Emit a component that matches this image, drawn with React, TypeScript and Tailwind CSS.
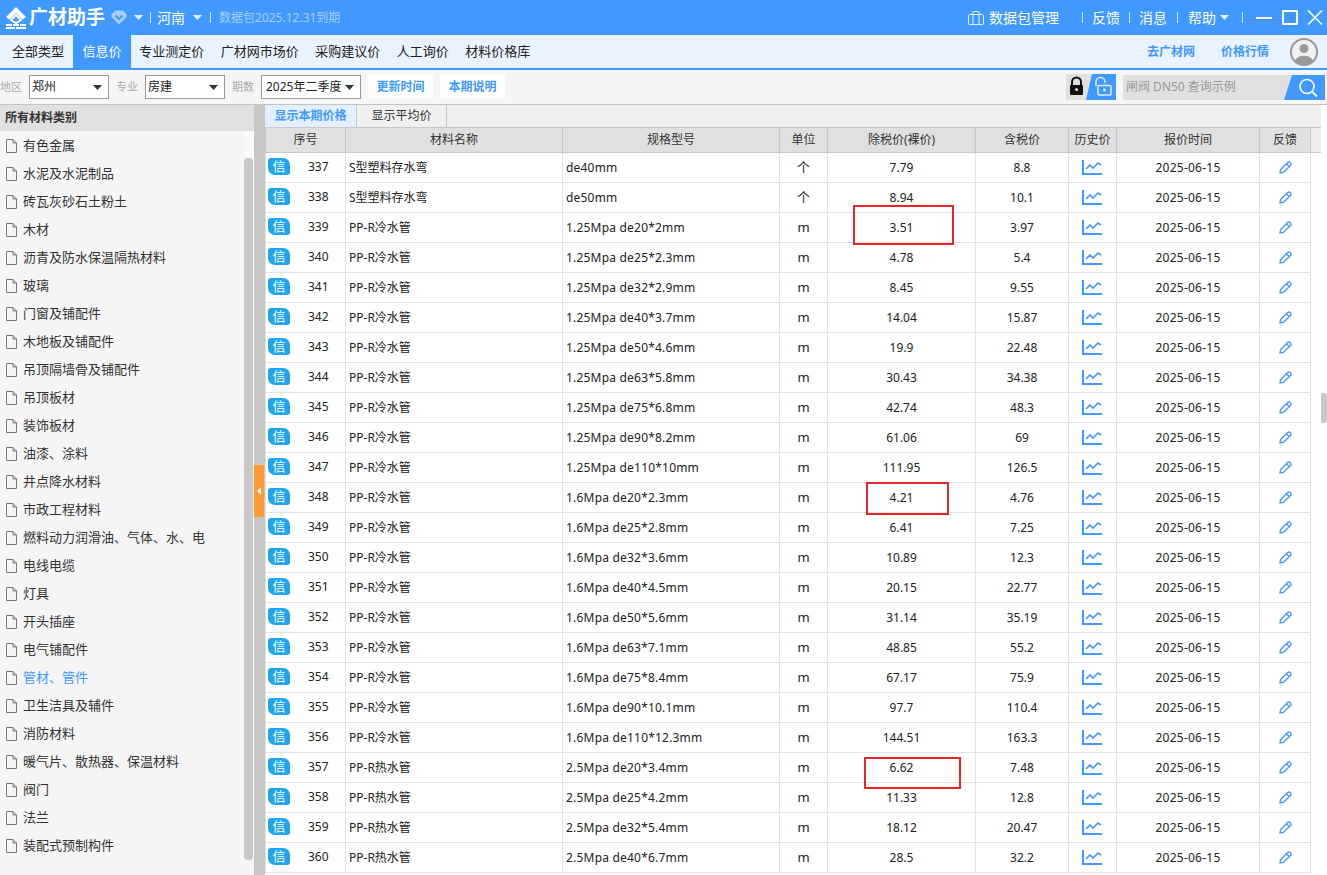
const font = "font-['Noto_Sans','Noto_Sans_CJK_SC',sans-serif]"

const categories = [
  '有色金属', '水泥及水泥制品', '砖瓦灰砂石土粉土', '木材', '沥青及防水保温隔热材料', '玻璃', '门窗及铺配件',
  '木地板及铺配件', '吊顶隔墙骨及铺配件', '吊顶板材', '装饰板材', '油漆、涂料', '井点降水材料', '市政工程材料',
  '燃料动力润滑油、气体、水、电', '电线电缆', '灯具', '开头插座', '电气铺配件', '管材、管件', '卫生洁具及辅件',
  '消防材料', '暖气片、散热器、保温材料', '阀门', '法兰', '装配式预制构件',
]

const rows = [
  [337, 'S型塑料存水弯', 'de40mm', '个', '7.79', '8.8'],
  [338, 'S型塑料存水弯', 'de50mm', '个', '8.94', '10.1'],
  [339, 'PP-R冷水管', '1.25Mpa de20*2mm', 'm', '3.51', '3.97'],
  [340, 'PP-R冷水管', '1.25Mpa de25*2.3mm', 'm', '4.78', '5.4'],
  [341, 'PP-R冷水管', '1.25Mpa de32*2.9mm', 'm', '8.45', '9.55'],
  [342, 'PP-R冷水管', '1.25Mpa de40*3.7mm', 'm', '14.04', '15.87'],
  [343, 'PP-R冷水管', '1.25Mpa de50*4.6mm', 'm', '19.9', '22.48'],
  [344, 'PP-R冷水管', '1.25Mpa de63*5.8mm', 'm', '30.43', '34.38'],
  [345, 'PP-R冷水管', '1.25Mpa de75*6.8mm', 'm', '42.74', '48.3'],
  [346, 'PP-R冷水管', '1.25Mpa de90*8.2mm', 'm', '61.06', '69'],
  [347, 'PP-R冷水管', '1.25Mpa de110*10mm', 'm', '111.95', '126.5'],
  [348, 'PP-R冷水管', '1.6Mpa de20*2.3mm', 'm', '4.21', '4.76'],
  [349, 'PP-R冷水管', '1.6Mpa de25*2.8mm', 'm', '6.41', '7.25'],
  [350, 'PP-R冷水管', '1.6Mpa de32*3.6mm', 'm', '10.89', '12.3'],
  [351, 'PP-R冷水管', '1.6Mpa de40*4.5mm', 'm', '20.15', '22.77'],
  [352, 'PP-R冷水管', '1.6Mpa de50*5.6mm', 'm', '31.14', '35.19'],
  [353, 'PP-R冷水管', '1.6Mpa de63*7.1mm', 'm', '48.85', '55.2'],
  [354, 'PP-R冷水管', '1.6Mpa de75*8.4mm', 'm', '67.17', '75.9'],
  [355, 'PP-R冷水管', '1.6Mpa de90*10.1mm', 'm', '97.7', '110.4'],
  [356, 'PP-R冷水管', '1.6Mpa de110*12.3mm', 'm', '144.51', '163.3'],
  [357, 'PP-R热水管', '2.5Mpa de20*3.4mm', 'm', '6.62', '7.48'],
  [358, 'PP-R热水管', '2.5Mpa de25*4.2mm', 'm', '11.33', '12.8'],
  [359, 'PP-R热水管', '2.5Mpa de32*5.4mm', 'm', '18.12', '20.47'],
  [360, 'PP-R热水管', '2.5Mpa de40*6.7mm', 'm', '28.5', '32.2'],
]

const gridCols = 'grid grid-cols-[81px_217px_217px_48px_148px_93px_48px_143px_51px]'

function Caret({ className = '' }: { className?: string }) {
  return (
    <svg width="9" height="5" viewBox="0 0 9 5" className={`shrink-0 ${className}`}>
      <polygon points="0,0 9,0 4.5,5" fill="currentColor" />
    </svg>
  )
}

function Divider({ className = '' }: { className?: string }) {
  return <div className={`w-px h-[11px] bg-[#d8e9ff] shrink-0 ${className}`} />
}

function Logo() {
  return (
    <svg width="22" height="23" viewBox="0 0 22 23" className="ml-[5px] shrink-0">
      <path d="M11 1 L21 11 L17.5 13.5 L11 7 L4.5 13.5 L1 11 Z" fill="#fff" />
      <path d="M11 9 L16 14 L11 17 L6 14 Z" fill="none" stroke="#fff" strokeWidth="2" />
      <rect x="1" y="18" width="6" height="2" fill="#fff" />
      <rect x="8" y="18" width="6" height="2" fill="#fff" />
      <rect x="15" y="18" width="6" height="2" fill="#fff" />
      <rect x="1" y="21" width="9" height="2" fill="#fff" />
      <rect x="11" y="21" width="10" height="2" fill="#fff" />
    </svg>
  )
}

function TitleBar() {
  return (
    <div className="h-[35px] bg-[#4099ff] flex items-center text-white shrink-0 whitespace-nowrap">
      <Logo />
      <span className="ml-[2px] text-[19px] font-bold leading-none">广材助手</span>
      <svg width="16" height="15" viewBox="0 0 16 15" className="ml-[6px] shrink-0">
        <path d="M4 0.5 H12 L15.5 4.5 V7 L8 14.5 L0.5 7 V4.5 Z" fill="#a9cefb" />
        <path d="M4.5 5.5 L8 9 L11.5 5.5" fill="none" stroke="#4099ff" strokeWidth="2" />
      </svg>
      <Caret className="ml-[7px] text-[#e6f1ff]" />
      <Divider className="ml-[7px]" />
      <span className="ml-[6px] text-[14px] leading-none">河南</span>
      <Caret className="ml-[8px] text-[#e6f1ff]" />
      <Divider className="ml-[8px]" />
      <span className="ml-[8px] text-[12px] leading-none text-[#a6cdfb]">数据包2025.12.31到期</span>
      <div className="flex-1" />

      <svg width="16" height="14" viewBox="0 0 16 14" className="shrink-0" fill="none" stroke="#e6f1ff" strokeWidth="1">
        <rect x="0.5" y="3.5" width="15" height="10" rx="1" />
        <path d="M5 13.5 V1 a0.5 0.5 0 0 1 0.5 -0.5 H10.5 a0.5 0.5 0 0 1 0.5 0.5 V13.5" />
      </svg>
      <span className="ml-[5px] text-[14px] leading-none">数据包管理</span>
      <Divider className="ml-[23px]" />
      <span className="ml-[9px] text-[14px] leading-none">反馈</span>
      <Divider className="ml-[9px]" />
      <span className="ml-[9px] text-[14px] leading-none">消息</span>
      <Divider className="ml-[10px]" />
      <span className="ml-[10px] text-[14px] leading-none">帮助</span>
      <Caret className="ml-[4px] text-[#e6f1ff]" />
      <Divider className="ml-[13px]" />
      <div className="ml-[13px] w-[16px] h-[2px] bg-white" />
      <div className="ml-[10px] w-[16px] h-[15px] border-2 border-white rounded-[1px]" />
      <svg width="16" height="15" viewBox="0 0 16 15" className="ml-[9px] mr-[4px] shrink-0" stroke="#fff" strokeWidth="1.6">
        <path d="M1 0.5 L15 14.5 M15 0.5 L1 14.5" />
      </svg>
    </div>
  )
}

const navTabs = ['专业测定价', '广材网市场价', '采购建议价', '人工询价', '材料价格库']

function NavBar() {
  return (
    <div className="h-[35px] bg-[#e9f2ff] border-b-2 border-[#4099ff] flex items-stretch text-[13px] text-[#222] shrink-0">
      <div className="w-[73px] pl-[3px] flex items-center justify-center">全部类型</div>
      <div className="w-[58px] bg-[#4099ff] text-white flex items-center justify-center">信息价</div>
      {navTabs.map((t) => (
        <div key={t} className="px-[8.25px] flex items-center">
          {t}
        </div>
      ))}
      <div className="flex-1" />
      <div className="flex items-center gap-[26px] font-bold text-[12px] text-[#4099ff]">
        <span>去广材网</span>
        <span>价格行情</span>
      </div>
      <svg width="28" height="28" viewBox="0 0 28 28" className="ml-[21px] mr-[9px] self-center">
        <circle cx="14" cy="14" r="13" fill="#f1f1f1" stroke="#9a9a9a" strokeWidth="2" />
        <circle cx="14" cy="10.5" r="4.5" fill="#9a9a9a" />
        <path d="M5 23 C7 16 21 16 23 23 A13 13 0 0 1 5 23 Z" fill="#9a9a9a" />
      </svg>
    </div>
  )
}

function FakeSelect({ label, value, width, pad, gap }: { label: string; value: string; width: string; pad: string; gap?: string }) {
  return (
    <>
      <span className={`text-[11px] text-[#aaa] ${gap ?? ''}`}>{label}</span>
      <div className={`${width} ${pad} h-[24px] ml-[7px] bg-white border border-[#999] flex items-center justify-between pr-[6px] text-[12px] text-[#222]`}>
        <span>{value}</span>
        <Caret className="text-[#333]" />
      </div>
    </>
  )
}

function Toolbar() {
  return (
    <div className="h-[35px] bg-[#f5f5f5] border-b border-[#c4c4c4] flex items-center shrink-0">
      <FakeSelect label="地区" value="郑州" width="w-[80px]" pad="pl-[2px]" />
      <FakeSelect label="专业" value="房建" width="w-[80px]" pad="pl-[2px]" gap="ml-[7px]" />
      <FakeSelect label="期数" value="2025年二季度" width="w-[100px]" pad="pl-[4px]" gap="ml-[7px]" />
      <div className="ml-[7px] w-[65px] h-[24px] bg-white text-[#4099ff] text-[12px] font-bold flex items-center justify-center">更新时间</div>
      <div className="ml-[7px] w-[65px] h-[24px] bg-white text-[#4099ff] text-[12px] font-bold flex items-center justify-center">本期说明</div>
      <div className="flex-1" />
      <svg width="50" height="26" viewBox="0 0 50 26">
        <rect width="50" height="26" fill="#e0e0e0" />
        <polygon points="26,0 50,0 50,26 20,26" fill="#4099ff" />
        <path d="M6 11.5 V8 a4.5 4.5 0 0 1 9 0 V11.5" fill="none" stroke="#111" strokeWidth="2" />
        <rect x="4" y="11" width="13" height="10" rx="1" fill="#111" />
        <circle cx="10.5" cy="15.5" r="1.6" fill="#e0e0e0" />
        <path d="M30 12 V8 a4.5 4.5 0 0 1 9 0 V9" fill="none" stroke="#e4f0ff" strokeWidth="1.5" />
        <rect x="32" y="11.5" width="13" height="9.5" rx="1" fill="none" stroke="#e4f0ff" strokeWidth="1.5" />
        <circle cx="38.5" cy="16" r="1.4" fill="#e4f0ff" />
      </svg>
      <div className="relative ml-[7px] mr-[2px] w-[202px] h-[25px] bg-[#e0e0e0] overflow-hidden flex items-center pl-[3px] text-[12px] text-[#999]">
        闸阀 DN50 查询示例
        <svg width="41" height="25" viewBox="0 0 41 25" className="absolute right-0 top-0">
          <polygon points="8,0 41,0 41,25 0,25" fill="#4099ff" />
          <circle cx="23" cy="11.5" r="7" fill="none" stroke="#fff" strokeWidth="1.6" />
          <path d="M28.5 17 L33 21.5" stroke="#fff" strokeWidth="1.8" />
        </svg>
      </div>
    </div>
  )
}

function Sidebar() {
  return (
    <div className="relative w-[254px] bg-[#f5f5f5] shrink-0 overflow-hidden">
      <div className="h-[26px] bg-[#e0e0e0] pl-[5px] flex items-center text-[12px] font-bold text-[#333]">所有材料类别</div>
      <div className="flex">
        <div className="w-[244px] pt-px">
          {categories.map((c) => (
            <div key={c} className={`h-[28px] flex items-center pl-[6px] text-[13px] ${c === '管材、管件' ? 'text-[#4099ff]' : 'text-[#333]'}`}>
              <svg width="11" height="14" viewBox="0 0 11 14" fill="none" stroke="#777" strokeWidth="1">
                <path d="M0.5 0.5 H7 L10.5 4 V13.5 H0.5 Z M7 0.5 V4 H10.5" />
              </svg>
              <span className="ml-[6px]">{c}</span>
            </div>
          ))}
        </div>
        <div className="w-[10px] flex flex-col">
          <div className="h-[27px] bg-[#fafafa]" />
          <div className="w-[9px] flex-1 bg-[#c8c8c8] rounded-[4px]" />
        </div>
      </div>
    </div>
  )
}

function Gutter() {
  return (
    <div className="w-[11px] bg-[#c8c7c5] shrink-0 flex flex-col pt-[360px]">
      <div className="w-[10px] h-[52px] bg-[#ff9933] flex items-center justify-center">
        <svg width="4" height="8" viewBox="0 0 4 8">
          <polygon points="4,0 4,8 0,4" fill="#fff" />
        </svg>
      </div>
    </div>
  )
}

function PriceTable() {
  const headers = ['序号', '材料名称', '规格型号', '单位', '除税价(裸价)', '含税价', '历史价', '报价时间', '反馈']
  return (
    <div className="flex-1 min-w-0 bg-white">
      <div className="h-[22px] bg-[#f0f0f0] flex items-stretch text-[12px]">
        <div className="w-[91px] bg-[#e3efff] text-[#4099ff] font-bold flex items-center justify-center">显示本期价格</div>
        <div className="w-[91px] border-x border-[#c8c8c8] text-[#333] flex items-center justify-center">显示平均价</div>
      </div>
      <div className="flex h-[26px] border-y border-[#c8c8c8] bg-[#eeeeee]">
        <div className={`${gridCols} bg-[#e0e0e0]`}>
          {headers.map((h, i) => (
            <div key={h} className={`flex items-center justify-center text-[12px] text-[#333] border-r border-[#c8c8c8] ${i === 0 ? 'border-l' : ''}`}>
              {h}
            </div>
          ))}
        </div>
      </div>
      {rows.map((r) => (
        <div key={r[0]} className={`${gridCols} h-[30px] w-fit text-[12px] text-[#222] border-b border-[#e3e3e3]`}>
          <div className="border-x border-[#e3e3e3] flex items-center pl-[2px] pb-[2px]">
            <div className="w-[22px] h-[17px] bg-[#1ea5ee] text-white text-[13px] leading-none flex items-center justify-center rounded-tl-[3px] rounded-tr-[7px] rounded-br-[3px] rounded-bl-[7px]">信</div>
            <span className="ml-[18px]">{r[0]}</span>
          </div>
          <div className="border-r border-[#e3e3e3] flex items-center pl-[3px]">{r[1]}</div>
          <div className="border-r border-[#e3e3e3] flex items-center pl-[3px] tracking-[0.2px]">{r[2]}</div>
          <div className="border-r border-[#e3e3e3] flex items-center justify-center text-[13px]">{r[3]}</div>
          <div className="border-r border-[#e3e3e3] flex items-center justify-center">{r[4]}</div>
          <div className="border-r border-[#e3e3e3] flex items-center justify-center">{r[5]}</div>
          <div className="border-r border-[#e3e3e3] flex items-center justify-center">
            <svg width="20" height="15" viewBox="0 0 20 15" fill="none" stroke="#4099ff" className="mr-px">
              <path d="M1 0 V14 H20" strokeWidth="2" />
              <path d="M4 9 L8 5 L11 8 L16 3 L19 5" strokeWidth="1.6" />
            </svg>
          </div>
          <div className="border-r border-[#e3e3e3] flex items-center justify-center tracking-[0.25px]">2025-06-15</div>
          <div className="border-r border-[#e3e3e3] flex items-center justify-center">
            <svg width="13" height="13" viewBox="0 0 13 13" fill="none" stroke="#4099ff" strokeWidth="1.4">
              <path d="M1 12 L1.6 8.6 L8.6 1.6 a1.6 1.6 0 0 1 2.5 0 l0.4 0.4 a1.6 1.6 0 0 1 0 2.4 L4.4 11.4 Z M7.4 2.8 L10.2 5.6" />
            </svg>
          </div>
        </div>
      ))}
    </div>
  )
}

export default function App() {
  return (
    <div className={`relative w-[1327px] h-[875px] overflow-hidden flex flex-col bg-white ${font}`}>
      <TitleBar />
      <NavBar />
      <Toolbar />
      <div className="flex flex-1 min-h-0">
        <Sidebar />
        <Gutter />
        <PriceTable />
        <div className="w-[6px] shrink-0 pt-[288px]">
          <div className="h-[30px] bg-[#c8c8c8] rounded-[2px]" />
        </div>
      </div>
      <div className="absolute left-[853px] top-[205px] w-[101px] h-[40px] border-2 border-[#e8262a]" />
      <div className="absolute left-[866px] top-[482px] w-[83px] h-[33px] border-2 border-[#e8262a]" />
      <div className="absolute left-[864px] top-[757px] w-[97px] h-[32px] border-2 border-[#e8262a]" />
    </div>
  )
}
